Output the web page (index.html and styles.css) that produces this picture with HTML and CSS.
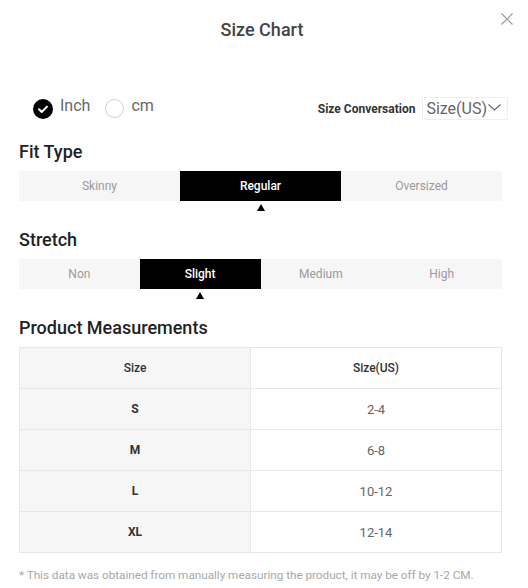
FILE: index.html
```html
<!DOCTYPE html>
<html lang="en">
<head>
<meta charset="utf-8">
<title>Size Chart</title>
<link rel="stylesheet" href="styles.css">
</head>
<body>
<div class="modal">
  <header class="modal-head">
    <h1 class="modal-title">Size Chart</h1>
    <button class="close" aria-label="Close">
      <svg width="12" height="12" viewBox="0 0 12 12"><path d="M0.5 0.5L11.5 11.5M11.5 0.5L0.5 11.5" stroke="#9a9a9a" stroke-width="1.2" fill="none"/></svg>
    </button>
  </header>

  <div class="options">
    <div class="units">
      <span class="radio checked">
        <svg width="20" height="20" viewBox="0 0 20 20"><circle cx="10" cy="10" r="10" fill="#000"/><path d="M6 10.3L8.7 13L14 7.6" stroke="#fff" stroke-width="2" fill="none" stroke-linecap="round" stroke-linejoin="round"/></svg>
      </span>
      <span class="unit-label">Inch</span>
      <span class="radio empty"></span>
      <span class="unit-label">cm</span>
    </div>
    <div class="conv">
      <span class="conv-label">Size Conversation</span>
      <div class="select">
        <span>Size(US)</span>
        <svg width="13" height="7" viewBox="0 0 13 7"><path d="M0.5 0.5L6.5 6L12.5 0.5" stroke="#666" stroke-width="1.2" fill="none"/></svg>
      </div>
    </div>
  </div>

  <section class="section first">
    <h2 class="sec-title">Fit Type</h2>
    <div class="seg">
      <div class="seg-item">Skinny</div>
      <div class="seg-item active">Regular</div>
      <div class="seg-item">Oversized</div>
    </div>
  </section>

  <section class="section">
    <h2 class="sec-title">Stretch</h2>
    <div class="seg">
      <div class="seg-item">Non</div>
      <div class="seg-item active">Slight</div>
      <div class="seg-item">Medium</div>
      <div class="seg-item">High</div>
    </div>
  </section>

  <section class="section">
    <h2 class="sec-title">Product Measurements</h2>
    <table class="measure">
      <thead>
        <tr><th class="col-size">Size</th><th class="col-us">Size(US)</th></tr>
      </thead>
      <tbody>
        <tr><td class="col-size">S</td><td class="col-us">2-4</td></tr>
        <tr><td class="col-size">M</td><td class="col-us">6-8</td></tr>
        <tr><td class="col-size">L</td><td class="col-us">10-12</td></tr>
        <tr><td class="col-size">XL</td><td class="col-us">12-14</td></tr>
      </tbody>
    </table>
    <p class="note">* This data was obtained from manually measuring the product, it may be off by 1-2 CM.</p>
  </section>
</div>
</body>
</html>
```

FILE: styles.css
```css
* { box-sizing: border-box; }
html, body { margin: 0; padding: 0; background: #fff; }
body {
  font-family: Roboto, "Liberation Sans", Arial, sans-serif;
  color: #333;
}
.modal {
  position: relative;
  width: 528px;
  padding: 0 26px 0 19px;
}
.modal-head {
  height: 60px;
  display: flex;
  align-items: center;
  justify-content: center;
  margin-left: -19px;
  margin-right: -26px;
}
.modal-title {
  margin: 0;
  font-size: 18px;
  font-weight: 500;
  color: #444;
  line-height: 60px;
  transform: translateX(-2px);
}
.close {
  position: absolute;
  top: 13px;
  right: 15px;
  width: 12px;
  height: 12px;
  padding: 0;
  border: 0;
  background: none;
  display: block;
}
.close svg { display: block; }

.options {
  margin-top: 37px;
  height: 23px;
  display: flex;
  align-items: center;
  justify-content: space-between;
  margin-right: -6px;
}
.units {
  display: flex;
  align-items: center;
  padding-left: 14px;
}
.radio { width: 20px; height: 20px; display: block; }
.radio svg { display: block; }
.radio.empty {
  width: 19px;
  height: 19px;
  border: 1px solid #cfcfcf;
  border-radius: 50%;
  margin-left: 15px;
}
.unit-label {
  font-size: 16px;
  color: #666;
  margin-left: 7px;
  padding-bottom: 6px;
  line-height: 20px;
}
.conv {
  display: flex;
  align-items: center;
}
.conv-label {
  font-size: 12px;
  font-weight: 700;
  color: #333;
  margin-right: 7px;
}
.select {
  height: 23px;
  border: 1px solid #efefef;
  display: flex;
  align-items: center;
  padding: 0 6px 0 3px;
  font-size: 16px;
  color: #666;
}
.select svg { display: block; margin-left: 1px; margin-top: -2px; }

.section { margin-top: 28px; }
.section.first { margin-top: 21px; }
.sec-title {
  margin: 0 0 8px;
  font-size: 18px;
  line-height: 22px;
  font-weight: 500;
  color: #222;
}
.seg {
  display: flex;
  height: 30px;
  background: #f6f6f6;
}
.seg-item {
  flex: 1;
  position: relative;
  display: flex;
  align-items: center;
  justify-content: center;
  font-size: 12px;
  color: #9a9a9a;
}
.seg-item.active {
  background: #000;
  color: #fff;
  font-weight: 500;
}
.seg-item.active::after {
  content: "";
  position: absolute;
  top: calc(100% + 3px);
  left: 50%;
  margin-left: -4px;
  border-left: 4px solid transparent;
  border-right: 4px solid transparent;
  border-bottom: 7px solid #000;
}

.measure {
  width: 100%;
  border-collapse: collapse;
  table-layout: fixed;
  margin-top: 0;
}
.measure th, .measure td {
  height: 41px;
  border: 1px solid #e8e8e8;
  text-align: center;
  padding: 0;
  font-size: 12px;
}
.measure .col-size {
  width: 231px;
  background: #f6f6f6;
  color: #333;
  font-weight: 500;
}
.measure td.col-size { font-weight: 700; font-size: 12px; }
.measure th.col-us { background: #fff; font-weight: 500; color: #333; }
.measure td.col-us { background: #fff; color: #666; font-size: 13px; }

.note {
  margin: 14px 0 0;
  font-size: 11.8px;
  letter-spacing: -0.05px;
  line-height: 16px;
  color: #a8a8a8;
  white-space: nowrap;
}
```
